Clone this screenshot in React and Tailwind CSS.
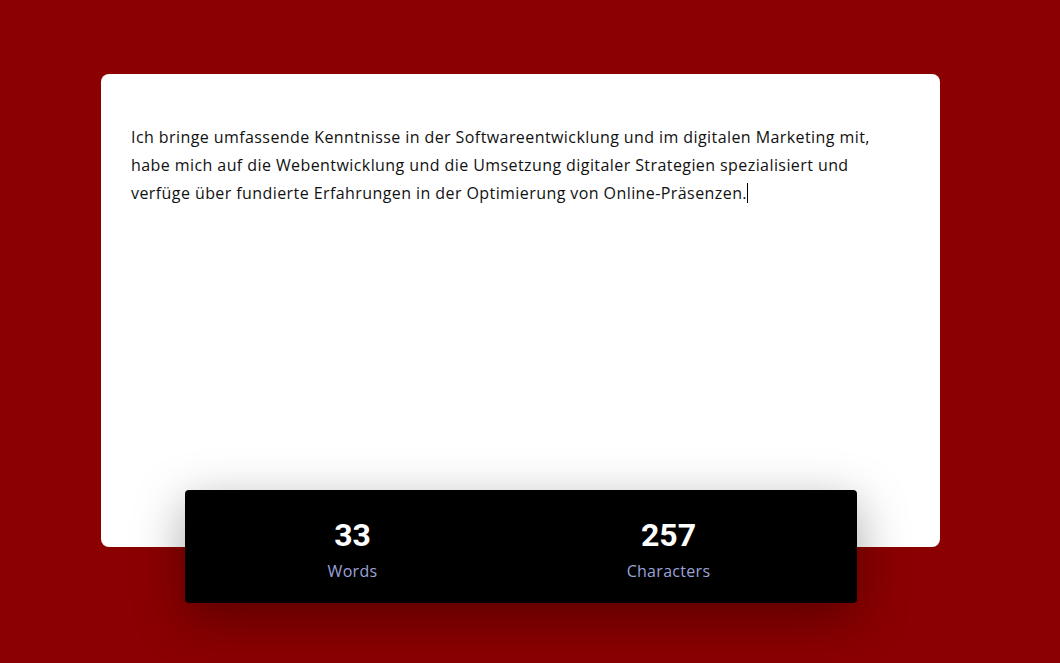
import React from 'react';

const lines = [
    'Ich bringe umfassende Kenntnisse in der Softwareentwicklung und im digitalen Marketing mit,',
    'habe mich auf die Webentwicklung und die Umsetzung digitaler Strategien spezialisiert und',
    'verfüge über fundierte Erfahrungen in der Optimierung von Online-Präsenzen.',
];

const Stat = ({ value, label }) => (
    <div className="flex flex-col items-center">
        <span className="text-[32px] leading-[40px] font-bold text-white font-['Roboto',sans-serif]">{value}</span>
        <span className="mt-[4px] text-[16px] leading-[24px] tracking-[0.3px] text-[#9ba3d9]">{label}</span>
    </div>
);

const App = () => {
    return (
        <div className="min-h-[663px] w-full bg-[#8b0000] pt-[74px] font-['Open_Sans',sans-serif]">
            <div className="ml-[101px] w-[839px]">
                {/* Editor card */}
                <div className="h-[473px] rounded-[8px] bg-white px-[30px] pt-[49px]">
                    <div className="text-[16px] leading-[28px] text-[#111] tracking-[0.42px]">
                        {lines.map((line, i) => (
                            <div key={i} className="whitespace-nowrap">
                                {line}
                                {i === lines.length - 1 && (
                                    <span className="inline-block h-[20px] w-px bg-black align-[-4px]"></span>
                                )}
                            </div>
                        ))}
                    </div>
                </div>

                {/* Counter bar */}
                <div className="relative mx-auto -mt-[57px] grid h-[113px] w-[672px] grid-cols-2 items-center rounded-[4px] bg-black pt-[5px] pl-[10px] pr-[30px] shadow-[0_14px_50px_rgba(0,0,0,0.35)]">
                    <Stat value="33" label="Words" />
                    <Stat value="257" label="Characters" />
                </div>
            </div>
        </div>
    );
};

export default App;
